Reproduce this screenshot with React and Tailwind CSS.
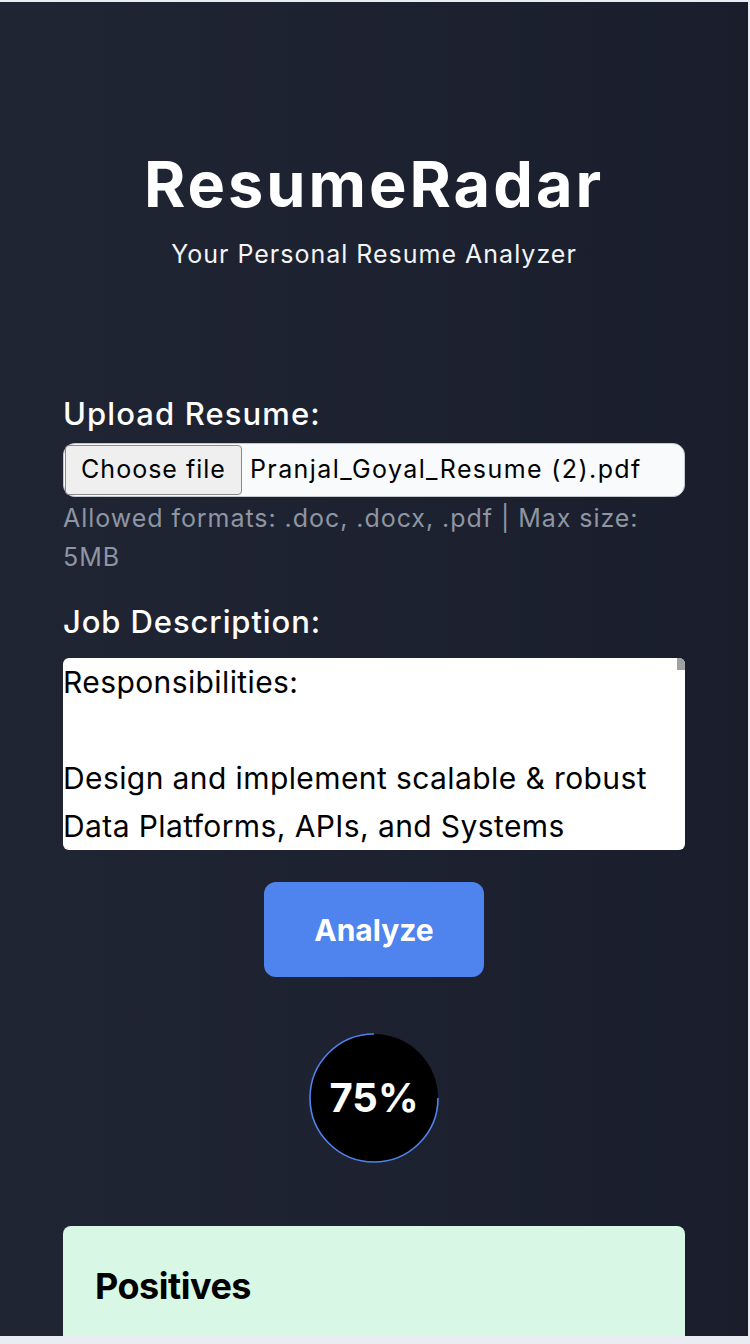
export default function App() {
  const font = { fontFamily: "Inter, 'Noto Sans', sans-serif" };
  return (
    <div className="min-h-screen bg-[#e9ecf2] pt-[2px]" style={font}>
      <div className="w-[748px] h-[1334px] overflow-hidden bg-gradient-to-r from-[#202534] to-[#1a1e2c]">
        <div className="w-[622px] mx-auto">
          {/* header */}
          <div className="pt-[150px] text-center text-white">
            <h1 className="text-[63px] leading-[64px] font-bold tracking-[3px]">ResumeRadar</h1>
            <p className="mt-[22px] text-[25px] leading-8 text-gray-100 tracking-[1px]">Your Personal Resume Analyzer</p>
          </div>

          {/* upload */}
          <div className="mt-[126px]">
            <label className="block text-[31px] leading-9 font-medium text-white tracking-[1.1px]">Upload Resume:</label>
            <div className="mt-[11px] h-[54px] flex items-center rounded-xl border border-[#c3c7cf] bg-[#f8fafc] px-[1px]">
              <span className="h-[50px] w-[177px] flex items-center justify-center rounded-[4px] border border-[#8a8a8a] bg-[#efefef] text-[25px] text-black tracking-[1px]">
                Choose file
              </span>
              <span className="ml-[8px] text-[25px] text-black tracking-[1.4px]">Pranjal_Goyal_Resume (2).pdf</span>
            </div>
            <p className="mt-[2px] text-[25px] leading-[39px] text-[#8e95a3] tracking-[0.95px]">
              Allowed formats: .doc, .docx, .pdf | Max size: 5MB
            </p>
          </div>

          {/* job description */}
          <div className="mt-[27px]">
            <label className="block text-[31px] leading-9 font-medium text-white tracking-[0.9px]">Job Description:</label>
            <div className="relative mt-[18px] h-[192px] overflow-hidden rounded-md bg-white text-[30px] leading-[48px] text-black tracking-[0.4px]">
              <p>Responsibilities:</p>
              <p>&nbsp;</p>
              <p>Design and implement scalable &amp; robust</p>
              <p>Data Platforms, APIs, and Systems</p>
              <div className="absolute right-0 top-0 h-[12px] w-[8px] bg-[#a0a0a0]"></div>
            </div>
          </div>

          {/* analyze */}
          <div className="mt-8 flex justify-center">
            <button className="h-[95px] w-[220px] rounded-xl bg-[#4f83ee] text-3xl font-bold text-white">
              Analyze
            </button>
          </div>

          {/* score */}
          <div className="mt-[56px] flex justify-center">
            <div className="relative h-[130px] w-[130px]">
              <svg width="130" height="130" viewBox="0 0 130 130" className="absolute inset-0">
                <circle cx="65" cy="65" r="64" fill="#000" />
                <path d="M 129 65 A 64 64 0 1 1 65 1" fill="none" stroke="#4f83ee" strokeWidth="1.6" />
              </svg>
              <div className="absolute inset-0 flex items-center justify-center text-[40px] font-bold text-white">
                75%
              </div>
            </div>
          </div>

          {/* positives */}
          <div className="mt-[63px] rounded-lg bg-[#d9f7e5] px-8 pt-10 pb-16">
            <h2 className="text-4xl leading-10 font-bold text-black tracking-[-0.5px]">Positives</h2>
          </div>
        </div>
      </div>
    </div>
  );
}
